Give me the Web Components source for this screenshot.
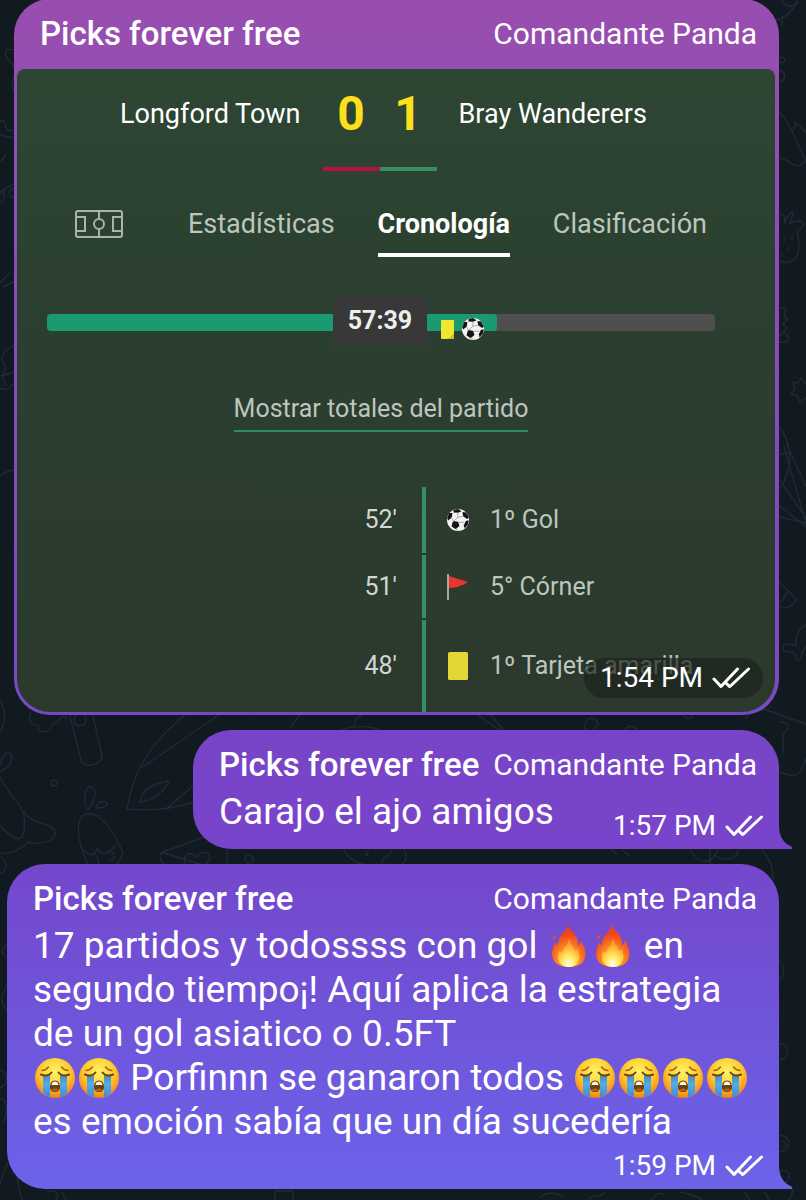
<!DOCTYPE html>
<html lang="es">
<head>
<meta charset="utf-8">
<meta name="viewport" content="width=device-width, initial-scale=1">
<title>Picks forever free</title>
<style>
  body {
    margin: 0;
    background: #111921;
    color: #fff;
    font-family: Roboto, "Liberation Sans", sans-serif;
  }
</style>
</head>
<body>
  <chat-thread>
    <chat-bubble sender="Picks forever free" admin="Comandante Panda" time="1:54 PM" media>
      <match-card home="Longford Town" away="Bray Wanderers" home-score="0" away-score="1">
        <match-tabs slot="tabs"></match-tabs>
        <match-progress slot="progress" time="57:39"></match-progress>
        <match-event minute="52'" icon="ball">1º Gol</match-event>
        <match-event minute="51'" icon="flag">5° Córner</match-event>
        <match-event minute="48'" icon="card">1º Tarjeta amarilla</match-event>
      </match-card>
    </chat-bubble>
    <chat-bubble sender="Picks forever free" admin="Comandante Panda" time="1:57 PM">Carajo el ajo amigos</chat-bubble>
    <chat-bubble sender="Picks forever free" admin="Comandante Panda" time="1:59 PM" tone="low">17 partidos y todossss con gol <chat-emoji name="fire"></chat-emoji><chat-emoji name="fire"></chat-emoji> en segundo tiempo¡! Aquí aplica la estrategia de un gol asiatico o 0.5FT<br><chat-emoji name="sob"></chat-emoji><chat-emoji name="sob"></chat-emoji> Porfinnn se ganaron todos <chat-emoji name="sob"></chat-emoji><chat-emoji name="sob"></chat-emoji><chat-emoji name="sob"></chat-emoji><chat-emoji name="sob"></chat-emoji> es emoción sabía que un día sucedería</chat-bubble>
  </chat-thread>

<script>
const BALL = /* html */ `
  <svg class="ball" viewBox="0 0 24 24" width="24" height="24" aria-hidden="true">
    <circle cx="12" cy="12" r="11" fill="#f4f4f4"/>
    <g fill="#151515">
      <path d="M7 13l5 .8 1.500 4.300-4 3.200-4-3z"/>
      <path d="M7.500 2l4.500-1 3.500 2.200-3.400 1.600-4.600-.3z"/>
      <path d="M1.200 10l2-5.100 3.200.1-.6 4.600-3.700 2.800z"/>
      <path d="M16.500 4l3.600.5 2.800 5-1.800 1.500-4-2.800z"/>
      <path d="M22.800 12.600l-.9 4-3.300 4-.8-3.400 2.200-4.400z"/>
    </g>
    <path d="M12 4.500l-.4 5 5.700-1.400M11.600 9.500L7.500 13.500 5.500 9.500M12 14.300h6.300M9.500 20.700l3 2" fill="none" stroke="#999" stroke-width=".8"/>
  </svg>`;

const ICONS = {
  ball: BALL,
  flag: /* html */ `
    <svg viewBox="0 0 24 28" width="24" height="28" aria-hidden="true">
      <path d="M2 1v26" stroke="#a3a9a4" stroke-width="2"/>
      <path d="M3 3L22 9C16 13 9 15 3 15z" fill="#e9352c"/>
    </svg>`,
  card: /* html */ `
    <svg viewBox="0 0 24 28" width="24" height="28" aria-hidden="true">
      <rect x="2" width="20" height="28" rx="1.500" fill="#e2d736"/>
    </svg>`
};

const EMOJI = {
  fire: /* html */ `
    <svg viewBox="0 0 40 42" role="img" aria-label="🔥">
      <defs>
        <radialGradient id="flame" cx=".5" cy=".85" r=".8">
          <stop offset="0" stop-color="#ffd83a"/><stop offset=".4" stop-color="#ff8a1f"/><stop offset=".8" stop-color="#f0441e"/>
        </radialGradient>
        <radialGradient id="core" cx=".5" cy=".9" r=".8">
          <stop offset="0" stop-color="#fffde8"/><stop offset=".4" stop-color="#ffe75a"/><stop offset=".9" stop-color="#ff9a2b"/>
        </radialGradient>
      </defs>
      <path d="M19 0c1 5 10 9 10 17 0 2-.5 3-.5 4 2-1 3-3 3-6 3 5 5 9 5 14 0 8-6 13-16.500 13S3 37 3 29c0-5 2-8 3-12 1 1 1.500 3 2 4 1-3 1-5 3-9 2-4 7-7 8-12z" fill="url(#flame)"/>
      <path d="M3.500 15c0-3 2-4 4-5-.5 2-1 3-4 5z" fill="#f4511e"/>
      <path d="M20 14c1 5 5 7 6 12 1-1 2-1 2.500-2 2 5 3 8 1 12-2 4-5 6-9.500 6s-8-2-10-5c-2-4-1-8 0-11 1 1 2 1 3 2 1-5 6-8 7-14z" fill="url(#core)"/>
    </svg>`,
  sob: /* html */ `
    <svg viewBox="0 0 40 42" role="img" aria-label="😭">
      <defs>
        <radialGradient id="face" cx=".5" cy=".34" r=".66">
          <stop offset="0" stop-color="#fff26a"/><stop offset=".5" stop-color="#ffd235"/><stop offset=".82" stop-color="#fb9f1f"/><stop offset="1" stop-color="#e57f18"/>
        </radialGradient>
        <linearGradient id="tear" x2="0" y2="1">
          <stop offset="0" stop-color="#5487a8"/><stop offset=".4" stop-color="#55acea"/><stop offset="1" stop-color="#3a8cd8"/>
        </linearGradient>
      </defs>
      <circle cx="20" cy="21" r="20" fill="url(#face)"/>
      <path d="M8 18h7v22c-3-1-5-2-7-4zM25 18h7v18c-2 2-4 3-7 4z" fill="url(#tear)"/>
      <path d="M7 13.500c3-.2 5-1.500 6.500-3.500M33 13.500c-3-.2-5-1.500-6.500-3.500" fill="none" stroke="#a76512" stroke-width="1.500" stroke-linecap="round"/>
      <path d="M6 17.500c3 1.500 8 1.500 10.500-2M34 17.500c-3 1.500-8 1.500-10.500-2" fill="none" stroke="#67400f" stroke-width="2" stroke-linecap="round"/>
      <path d="M20 23.500c3.500 0 5 3 5 6.500s-2 5-5 5-5-1.500-5-5 1.500-6.500 5-6.500z" fill="#70400c"/>
      <path d="M16.500 28c.5-2.500 1.800-3.500 3.500-3.500s3 1 3.500 3.500z" fill="#fff"/>
      <path d="M16.500 33c1-2 6-2 7 0-1.500 1.500-5.500 1.500-7 0z" fill="#a9691c"/>
    </svg>`
};

class ChatEmoji extends HTMLElement {
  constructor () {
    super();
    this.attachShadow({ mode: 'open' });
  }

  connectedCallback() {
    this.shadowRoot.innerHTML = /* html */ `
      <style>
        :host {
          display: inline-block;
          width: 44px;
          height: 42px;
          vertical-align: -9px;
        }
        svg {
          display: block;
          width: 40px;
          height: 42px;
          margin: 0 auto;
        }
      </style>
      ${EMOJI[this.getAttribute('name')]}
    `;
  }
}
window.customElements.define('chat-emoji', ChatEmoji);

const chatThread = document.createElement('template');
chatThread.innerHTML = /* html */ `
  <style>
    :host {
      display: block;
      position: relative;
      min-height: 100vh;
      overflow: hidden;
    }

    .wallpaper {
      position: absolute;
      inset: 0;
      fill: none;
      stroke: #202b35;
      stroke-width: 1.4;
      stroke-linecap: round;
      stroke-linejoin: round;
    }

    .messages {
      position: relative;
      display: flex;
      flex-direction: column;
      align-items: flex-end;
      gap: 15px;
      margin-top: -1px;
      padding: 0 27px 10px 7px;
    }
  </style>
  <svg class="wallpaper" width="806" height="1200" viewBox="0 0 806 1200" aria-hidden="true">
    <!-- left edge -->
    <path d="M14 50c-6-2-10 1-8 6s5 6 8 10M14 78c-3 4-2 9 0 12M0 122c4-5 5 2 7 8l7 1M0 135l14 3M0 161c3-1 4-3 5-6M0 193c8-8 10-6 14-9M0 203c6-4 5-12 1-12M14 188c-6 1-6 9 0 10M0 283l9-10M3 287l11-5M14 345c-14 8-14 14-8 22-3 6-5 12 0 18M0 376l14-4M0 388c8 4 12-2 14-5M0 476c4-3 8-6 14-6"/>
    <path d="M0 701c7 8 5 24 0 31M0 765c3-13 12-15 12-7 0 6-6 11-12 13M0 777c8 17 22 28 24 38 2 18-2 26-8 23-7-3-13-9-16-13M24 812c9 14 30 10 31 21 0 10-19 12-27 9-9 9-18 13-28 11M0 857c9 5 7 15 0 16M7 945c-6 2-7 9-1 11M7 985c-5 8-8 16 0 25M0 1070c9 4 9 14 0 18M0 1098c7 2 9 14 3 25M0 1183c8-22 12-32 20-36-7 15-3 32 2 53M48 1192c8-3 12 2 8 8M62 1192l4 8"/>
    <!-- sausage, drops and knife -->
    <path d="M31 712c-4 8 0 13 7 14-1 8 13 8 14-2 8 0 7-10 15-6M69 712l12 48c2 9 21 6 21-5l-10-43M74 721c2 7 12 6 12-2 0-8-12-8-12 2z"/>
    <circle cx="54" cy="783" r="3"/><circle cx="249" cy="859" r="4"/>
    <path d="M88 810c-5-7-4-23 2-23 9 1 5 13-2 23zM96 808c2-8 10-7 11-4 0 4-7 4-11 4zM88 865c-20-46-5-58 11-48 11 8 18 22 24 36l-6 12M84 850c5 8 11 5 13-1 6 8 13 4 19-5M97 857l2 8M112 852c4 4 2 8-2 9"/>
    <path d="M186 714c-35 28-53 57-59 95 23 2 46 0 67-7M143 767l77-53M194 785l-28 24M140 802c2-13 15-19 29-21-4 9-15 20-29 21zM162 853c-5 1 0 12 5 12M163 852l50-18M164 853l42 13M185 865c-3-9 4-15 11-8 5-8 17-5 13 4l-4 4M227 847v18"/>
    <!-- between the bubbles -->
    <path d="M300 715l-9 12M353 728c2-8 6-12 9-13M342 730c10-5 29-4 38 0M478 715l21 15M491 715l12 15M586 730c-5-12 9-16 12-7 0 4-4 4-4 7M625 730c2-5 9-5 12 0M684 715c2 5 8 4 8 0M344 851c6 8 14 14 24 14M365 851c2 9 3 2 3 0M382 865c-2-8 8-8 10-15M400 865c8-3 7-12 4-15M612 850l5 4M622 850l8 6M690 850c9 15 22 15 28 0M710 850v15M714 855c15 9 24 1 24-5M762 850c8 8 11 17 11 30"/>
    <!-- right edge -->
    <path d="M752 0c6 28 36 26 45 0M782 0c3 8 10 8 16 2M782 20v6M780 58c7-3 6 5 0 5M780 70c6 3 6 10 0 12M780 113c10 8 20 38 26 48-11 12-16-2-26-3M795 122c4 4 8 7 11 11M792 132l4-8M780 214c6 0 5 7 4 10 8-17 13-15 5 0 13-7 21 0 8 7 6 25-3 35-17 30M784 238v3M792 236v3M789 247v3M782 253v3"/>
    <path d="M780 308c6-2 7 2 4 9l4 2-5 6 4 3-7 8M780 342c9 2 12-6 3-10M806 384l-5-6-3 5-5-1 2 7-4 5 6 1 3 8 8-7M780 427c12 18 14 39 0 62M784 447l22 76M786 443l20 43M780 455l8-3M780 480l26 38M780 506l26 21M780 517l26 6"/>
    <path d="M780 583c4 4 11 9 16 16-4 9-11 11-16 7M780 603l8-11M806 625c-9 3-10 14-10 20-5 1-14-5-13 4 2 6 9 0 12 5 2 12 6 4 7-1 1-3 4-5 4-7M746 718l12-16 8 8 40 14M780 722c12 0 8 8 3 12v20M780 772c17 7 20 3 26-13M771 706c-5 8-9 2-12 5M780 962c5 3 5 12 0 17M780 1044c11 0 9 15 0 16M780 1135c12 1 12 17 0 16M782 1142c5-2 5 5 1 5M780 1172c11-5 12 8 4 12 12 2 9 10 5 16"/>
    <path d="M275 1200v-9h18v9M540 1197c6-5 16-5 23 0M589 1199c5-7 11 0 15-6M664 1195c-7-5-11 2-12 5M680 1192c12 2 20 6 22 8M745 1193l5 7M765 1192l4 8"/>
  </svg>
  <div class="messages" part="messages"><slot></slot></div>
`;

class ChatThread extends HTMLElement {
  constructor () {
    super();
    this.attachShadow({ mode: 'open' });
    this.shadowRoot.appendChild(chatThread.content.cloneNode(true));
  }
}
window.customElements.define('chat-thread', ChatThread);

const chatBubble = document.createElement('template');
chatBubble.innerHTML = /* html */ `
  <style>
    :host {
      --top: #7844c7;
      --bottom: #7844cb;
      display: block;
      position: relative;
      box-sizing: border-box;
      max-width: 100%;
      border-radius: 38px 38px 0 38px;
      background: linear-gradient(var(--top), var(--bottom));
    }
    :host([media]) {
      --top: #984eaf;
      --bottom: #7849c6;
      width: 100%;
      max-width: 765px;
      border-radius: 36px;
    }
    :host([tone="low"]) {
      --top: #7447cb;
      --bottom: #6b63e9;
    }

    header {
      display: flex;
      justify-content: space-between;
      gap: 14px;
      padding: 16px 22px 0 26px;
      font-size: 30px;
      line-height: 38px;
      white-space: nowrap;
    }
    .sender {
      font-size: 33px;
      font-weight: 500;
    }

    .body {
      display: flex;
      flex-wrap: wrap;
      align-items: flex-end;
      padding: 6px 16px 8px 26px;
    }
    .text {
      margin-bottom: 7px;
      font-size: 37px;
      line-height: 44px;
    }
    .meta {
      display: flex;
      align-items: center;
      gap: 9px;
      margin-left: auto;
      font-size: 28px;
      line-height: 30px;
      white-space: nowrap;
    }
    .meta svg {
      fill: none;
      stroke: currentColor;
      stroke-width: 3;
      stroke-linecap: round;
      stroke-linejoin: round;
    }

    .tail {
      position: absolute;
      left: 100%;
      bottom: 0;
      fill: var(--bottom);
    }

    :host([media]) .body {
      display: block;
      position: relative;
      margin: 16px 4px 3px 3px;
      padding: 0;
      border-radius: 8px 8px 33px 33px;
      background: linear-gradient(#2d4632, #2b3f30 40%, #2b392d);
      overflow: hidden;
    }
    :host([media]) .text {
      margin: 0;
    }
    :host([media]) .meta {
      position: absolute;
      right: 12px;
      bottom: 14px;
      padding: 5px 13px 5px 16px;
      border-radius: 20px;
      background: rgba(30, 36, 30, 0.7);
    }
    :host([media]) .tail {
      display: none;
    }
  </style>
  <header>
    <span class="sender"></span>
    <span class="admin"></span>
  </header>
  <div class="body">
    <div class="text"><slot></slot></div>
    <div class="meta">
      <time></time>
      <svg width="38" height="22" viewBox="0 0 38 22" aria-label="Leído" role="img">
        <path d="M2 12l7 7.500L25.500 2M17 19h1.500L36.500 2M14.500 16.500l3 3"/>
      </svg>
    </div>
  </div>
  <svg class="tail" width="14" height="24" viewBox="0 0 14 24" aria-hidden="true">
    <path d="M-1 0H0C0 11 4 18 12.500 21.500Q14.500 24 12 24H-1z"/>
  </svg>
`;

class ChatBubble extends HTMLElement {
  constructor () {
    super();
    this.attachShadow({ mode: 'open' });
    this.shadowRoot.appendChild(chatBubble.content.cloneNode(true));
  }

  connectedCallback() {
    this.shadowRoot.querySelector('.sender').textContent = this.getAttribute('sender');
    this.shadowRoot.querySelector('.admin').textContent = this.getAttribute('admin');
    this.shadowRoot.querySelector('time').textContent = this.getAttribute('time');
  }
}
window.customElements.define('chat-bubble', ChatBubble);

const matchCard = document.createElement('template');
matchCard.innerHTML = /* html */ `
  <style>
    :host {
      display: block;
      padding: 19px 60px 0 30px;
      font-size: 27px;
      line-height: 32px;
    }

    .scoreboard {
      display: grid;
      grid-template-columns: 1fr 114px 1fr;
      gap: 22px;
      height: 83px;
      padding-right: 3px;
      line-height: 52px;
      white-space: nowrap;
    }
    .home {
      text-align: right;
    }
    .score {
      display: grid;
      grid-template-columns: 1fr 1fr;
      text-align: center;
      color: #fde01b;
      font-size: 48px;
      font-weight: 700;
    }
    .score span {
      border-bottom: 4px solid #b4123f;
    }
    .score span + span {
      border-color: #359064;
    }

    .totals {
      margin-top: 61px;
      text-align: center;
    }
    .totals a {
      display: inline-block;
      padding-bottom: 5px;
      border-bottom: 2px solid #24916a;
      color: #bdc5bf;
      font-size: 25px;
      text-decoration: none;
    }

    .events {
      display: grid;
      grid-template-rows: 66px 63px 92px;
      gap: 2px;
      margin-top: 55px;
    }
  </style>
  <div class="scoreboard">
    <span class="home"></span>
    <div class="score"><span class="home-score"></span><span class="away-score"></span></div>
    <span class="away"></span>
  </div>
  <slot name="tabs"></slot>
  <slot name="progress"></slot>
  <div class="totals"><a href="#totales">Mostrar totales del partido</a></div>
  <div class="events"><slot></slot></div>
`;

class MatchCard extends HTMLElement {
  constructor () {
    super();
    this.attachShadow({ mode: 'open' });
    this.shadowRoot.appendChild(matchCard.content.cloneNode(true));
  }

  connectedCallback() {
    ['home', 'away', 'home-score', 'away-score'].forEach((name) => {
      this.shadowRoot.querySelector(`.${name}`).textContent = this.getAttribute(name);
    });
  }
}
window.customElements.define('match-card', MatchCard);

const matchTabs = document.createElement('template');
matchTabs.innerHTML = /* html */ `
  <style>
    :host {
      display: block;
      margin-top: 37px;
    }

    nav {
      display: flex;
      align-items: flex-start;
      justify-content: space-between;
      padding: 0 8px 0 28px;
    }

    button {
      padding: 0 0 13px;
      border: 0;
      border-bottom: 4px solid transparent;
      background: none;
      color: #bcc5be;
      font: inherit;
      cursor: pointer;
    }
    button[aria-selected="true"] {
      border-color: #fff;
      color: #fff;
      font-weight: 700;
    }
    .pitch {
      margin-right: 22px;
    }
    .pitch svg {
      display: block;
      fill: none;
      stroke: #a9b3ab;
      stroke-width: 2;
    }
  </style>
  <nav role="tablist">
    <button class="pitch" role="tab" aria-label="Campo">
      <svg width="48" height="30" viewBox="0 0 48 30">
        <rect x="1" y="3" width="46" height="26" rx="2"/>
        <path d="M24 3v8M24 21v8M1 9h9v14H1M47 9h-9v14h9"/>
        <circle cx="24" cy="16" r="5"/>
      </svg>
    </button>
    <button role="tab">Estadísticas</button>
    <button role="tab" aria-selected="true">Cronología</button>
    <button role="tab">Clasificación</button>
  </nav>
`;

class MatchTabs extends HTMLElement {
  constructor () {
    super();
    this.attachShadow({ mode: 'open' });
    this.shadowRoot.appendChild(matchTabs.content.cloneNode(true));
  }
}
window.customElements.define('match-tabs', MatchTabs);

class MatchProgress extends HTMLElement {
  constructor () {
    super();
    this.attachShadow({ mode: 'open' });
  }

  connectedCallback() {
    this.shadowRoot.innerHTML = /* html */ `
      <style>
        :host {
          display: block;
          position: relative;
          height: 17px;
          margin-top: 57px;
          border-radius: 4px;
          background: #504f4f;
        }
        .played {
          width: 67.4%;
          height: 100%;
          border-radius: 4px;
          background: #1b9a70;
        }
        /* clock and incidents sit over the bar */
        .clock {
          position: absolute;
          top: -18px;
          left: calc(50% - 48px);
          width: 94px;
          border-radius: 3px;
          background: #383838;
          color: #eee;
          font-size: 25px;
          font-weight: 700;
          line-height: 50px;
          text-align: center;
        }
        .incidents {
          position: absolute;
          top: 3px;
          left: 59%;
          display: flex;
          align-items: center;
          gap: 7px;
        }
        .incidents svg {
          display: block;
        }
      </style>
      <div class="played"></div>
      <span class="clock">${this.getAttribute('time')}</span>
      <div class="incidents">
        <svg width="13" height="19" viewBox="0 0 13 19" aria-hidden="true">
          <rect width="13" height="19" rx="1" fill="#f1e731"/>
          <path d="M13 12v7H5c4-1 7-3 8-7z" fill="#c9b92a"/>
        </svg>
        ${BALL}
      </div>
    `;
  }
}
window.customElements.define('match-progress', MatchProgress);

class MatchEvent extends HTMLElement {
  constructor () {
    super();
    this.attachShadow({ mode: 'open' });
  }

  connectedCallback() {
    this.shadowRoot.innerHTML = /* html */ `
      <style>
        :host {
          display: grid;
          grid-template-columns: 355px 4px 24px 1fr;
          column-gap: 20px;
          align-items: center;
          color: #bcc5be;
          font-size: 25px;
          white-space: nowrap;
        }
        .minute {
          padding-right: 5px;
          text-align: right;
          color: #d0d6d1;
        }
        .line {
          align-self: stretch;
          background: #378e64;
        }
        svg {
          display: block;
        }
      </style>
      <span class="minute">${this.getAttribute('minute')}</span>
      <span class="line"></span>
      ${ICONS[this.getAttribute('icon')]}
      <slot></slot>
    `;
  }
}
window.customElements.define('match-event', MatchEvent);
</script>
</body>
</html>
